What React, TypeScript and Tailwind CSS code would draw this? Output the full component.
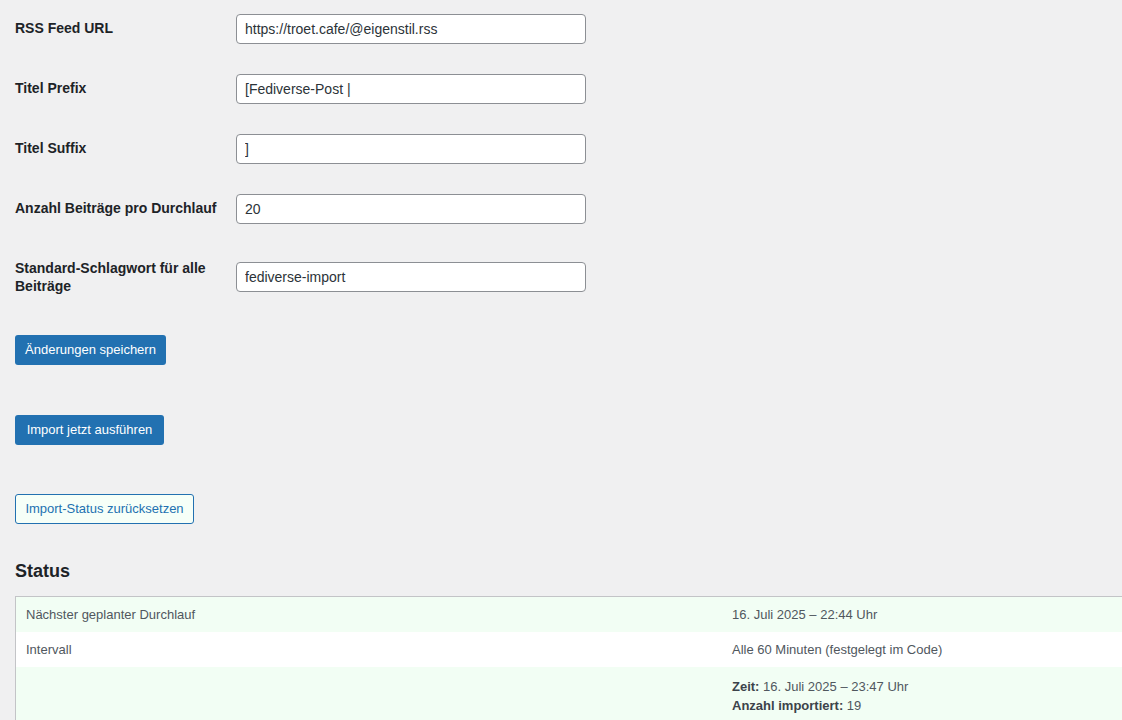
import React from 'react';

const fields = [
  { label: 'RSS Feed URL', value: 'https://troet.cafe/@eigenstil.rss' },
  { label: 'Titel Prefix', value: '[Fediverse-Post |' },
  { label: 'Titel Suffix', value: ']' },
  { label: 'Anzahl Beiträge pro Durchlauf', value: '20' },
];

const Field = ({ value }: { value: string }) => (
  <input
    type="text"
    defaultValue={value}
    className="w-[350px] h-[30px] px-2 bg-white border border-[#8c8f94] rounded-[4px] text-sm text-[#2c3338] outline-none"
  />
);

export default function App() {
  return (
    <div className="min-h-screen w-full overflow-hidden bg-[#f0f0f1] text-[#3c434a] font-['Liberation_Sans',Arial,sans-serif]">
      <div className="pl-[15px] -mt-px">
        {/* Settings form */}
        {fields.map((f, i) => (
          <div key={i} className="flex h-[60px]">
            <div className="w-[221px] pt-5 text-sm font-bold leading-[18px] text-[#1d2327]">{f.label}</div>
            <div className="flex items-center">
              <Field value={f.value} />
            </div>
          </div>
        ))}
        <div className="flex h-[76px]">
          <div className="w-[221px] pt-5 text-sm font-bold leading-[18px] text-[#1d2327] whitespace-nowrap">
            Standard-Schlagwort für alle
            <br />
            Beiträge
          </div>
          <div className="flex items-center">
            <Field value="fediverse-import" />
          </div>
        </div>

        {/* Buttons */}
        <div className="mt-[20px]">
          <button className="w-[151px] h-[30px] rounded-[3px] bg-[#2271b1] text-white text-[13px]">
            Änderungen speichern
          </button>
        </div>
        <div className="mt-[50px]">
          <button className="w-[149px] h-[30px] rounded-[3px] bg-[#2271b1] text-white text-[13px]">
            Import jetzt ausführen
          </button>
        </div>
        <div className="mt-[49px]">
          <button className="w-[179px] h-[30px] rounded-[3px] border border-[#2271b1] bg-[#f6fff8] text-[#2271b1] text-[13px]">
            Import-Status zurücksetzen
          </button>
        </div>

        {/* Status */}
        <h2 className="mt-[36px] text-[18px] font-bold leading-[23px] text-[#1d2327]">Status</h2>
        <div className="mt-[13px] w-[1414px] border border-[#c3c4c7] text-[13px] text-[#50575e]">
          <div className="flex bg-[#f2fef4] leading-[19px]">
            <div className="w-[706px] px-[10px] py-2">Nächster geplanter Durchlauf</div>
            <div className="flex-1 px-[10px] py-2">16. Juli 2025 – 22:44 Uhr</div>
          </div>
          <div className="flex bg-white leading-[19px]">
            <div className="w-[706px] px-[10px] py-2">Intervall</div>
            <div className="flex-1 px-[10px] py-2">Alle 60 Minuten (festgelegt im Code)</div>
          </div>
          <div className="flex bg-[#f2fef4] leading-[19px]">
            <div className="w-[706px] px-[10px] py-2"></div>
            <div className="flex-1 px-[10px] pt-[10px] pb-2">
              <div>
                <span className="font-bold text-[#3c434a]">Zeit:</span> 16. Juli 2025 – 23:47 Uhr
              </div>
              <div>
                <span className="font-bold text-[#3c434a]">Anzahl importiert:</span> 19
              </div>
            </div>
          </div>
        </div>
      </div>
    </div>
  );
}
